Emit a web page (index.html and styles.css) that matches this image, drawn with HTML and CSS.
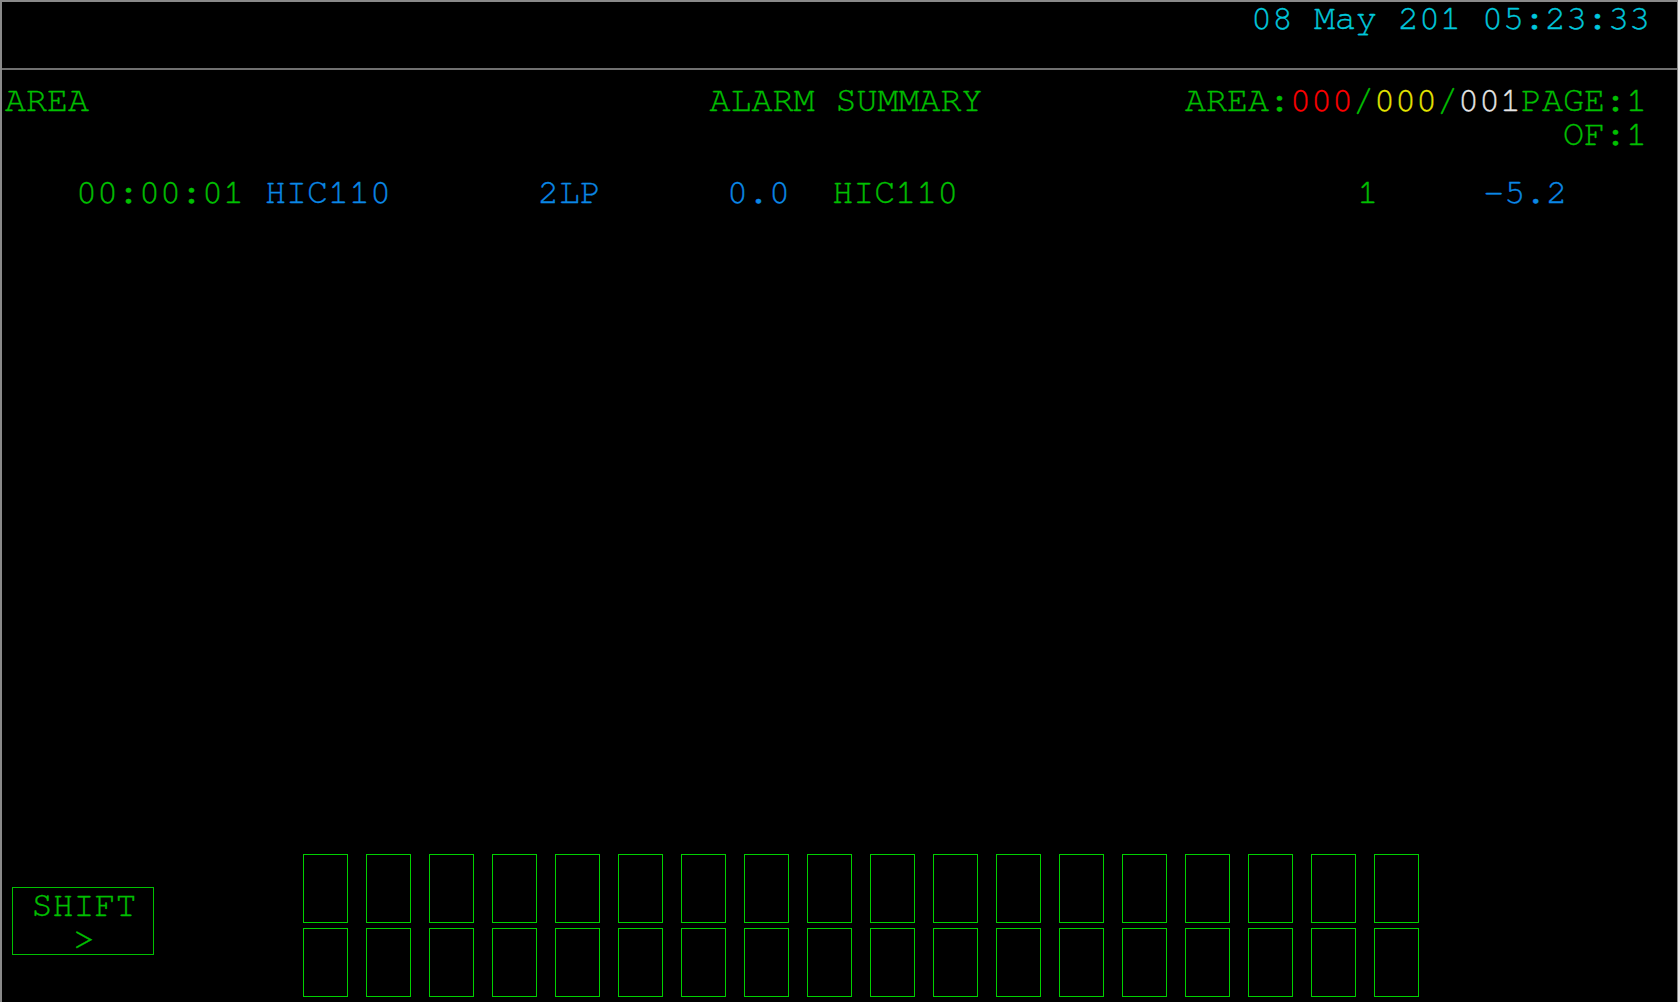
FILE: index.html
```html
<!DOCTYPE html>
<html>
<head>
<meta charset="utf-8">
<title>Alarm Summary</title>
<link rel="stylesheet" href="styles.css">
</head>
<body>
<div class="screen">
  <div class="topbar">
    <span class="clock">08 May 201 05:23:33</span>
  </div>
  <div class="header">
    <div class="hdr-left">AREA</div>
    <div class="hdr-title">ALARM SUMMARY</div>
    <div class="hdr-right">
      <div class="hdr-line">AREA:<span class="c-red">000</span>/<span class="c-yellow">000</span>/<span class="c-white">001</span>PAGE:1</div>
      <div class="hdr-line">OF:1</div>
    </div>
  </div>
  <div class="alarm-list">
    <pre class="alarm-row"><span class="c-green">00:00:01</span> <span class="c-blue">HIC110</span>       <span class="c-blue">2LP</span>      <span class="c-blue">0.0</span>  <span class="c-green">HIC110</span>                   <span class="c-green">1</span>     <span class="c-blue">-5.2</span></pre>
  </div>
  <div class="footer">
    <div class="shift-btn">
      <span>SHIFT</span>
      <span>&gt;</span>
    </div>
    <div class="keys">
      <div class="key"></div><div class="key"></div><div class="key"></div><div class="key"></div><div class="key"></div><div class="key"></div>
      <div class="key"></div><div class="key"></div><div class="key"></div><div class="key"></div><div class="key"></div><div class="key"></div>
      <div class="key"></div><div class="key"></div><div class="key"></div><div class="key"></div><div class="key"></div><div class="key"></div>
      <div class="key"></div><div class="key"></div><div class="key"></div><div class="key"></div><div class="key"></div><div class="key"></div>
      <div class="key"></div><div class="key"></div><div class="key"></div><div class="key"></div><div class="key"></div><div class="key"></div>
      <div class="key"></div><div class="key"></div><div class="key"></div><div class="key"></div><div class="key"></div><div class="key"></div>
    </div>
  </div>
</div>
</body>
</html>
```

FILE: styles.css
```css
html, body {
  margin: 0;
  padding: 0;
  background: #e8e8e8;
}

body {
  width: 1680px;
  height: 1002px;
  overflow: hidden;
}

.screen {
  box-sizing: border-box;
  width: 1678px;
  height: 1002px;
  background: #000;
  border-left: 2px solid #8a8a8a;
  border-top: 2px solid #8a8a8a;
  border-right: 1px solid #8a8a8a;
  display: flex;
  flex-direction: column;
  font-family: "FreeMono", "Nimbus Mono PS", "Nimbus Mono L", "Liberation Mono", monospace;
  font-size: 35px;
  line-height: 34px;
  -webkit-text-stroke: 0.35px currentColor;
  color: #00c000;
}

.topbar {
  height: 66px;
  border-bottom: 2px solid #707070;
  display: flex;
  justify-content: flex-end;
  align-items: flex-start;
  padding-right: 27px;
}

.clock {
  color: #00c8dc;
  white-space: pre;
}

.header {
  display: grid;
  grid-template-columns: 1fr auto 1fr;
  padding: 14px 30px 0 3px;
}

.hdr-title {
  white-space: pre;
  padding-left: 40px;
}

.hdr-right {
  display: flex;
  flex-direction: column;
  align-items: flex-end;
}

.hdr-line {
  white-space: pre;
}

.alarm-list {
  padding: 24px 0 0 74px;
}

.alarm-row {
  margin: 0;
  font: inherit;
  line-height: 34px;
}

.c-green { color: #00c000; }
.c-blue { color: #0a88e6; }
.c-red { color: #ff0000; }
.c-yellow { color: #e6e600; }
.c-white { color: #e6e6e6; }

.footer {
  margin-top: auto;
  display: flex;
  align-items: flex-end;
  padding: 0 0 5px 10px;
}

.shift-btn {
  box-sizing: border-box;
  width: 142px;
  height: 68px;
  border: 1px solid #00c000;
  display: flex;
  flex-direction: column;
  align-items: center;
  justify-content: flex-start;
  line-height: 34px;
  margin-bottom: 42px;
  padding-top: 1px;
  padding-left: 2px;
}

.keys {
  margin-left: 149px;
  display: grid;
  grid-template-columns: repeat(18, 45px);
  grid-auto-rows: 69px;
  column-gap: 18px;
  row-gap: 5px;
}

.key {
  box-sizing: border-box;
  border: 1px solid #00d000;
}
```
